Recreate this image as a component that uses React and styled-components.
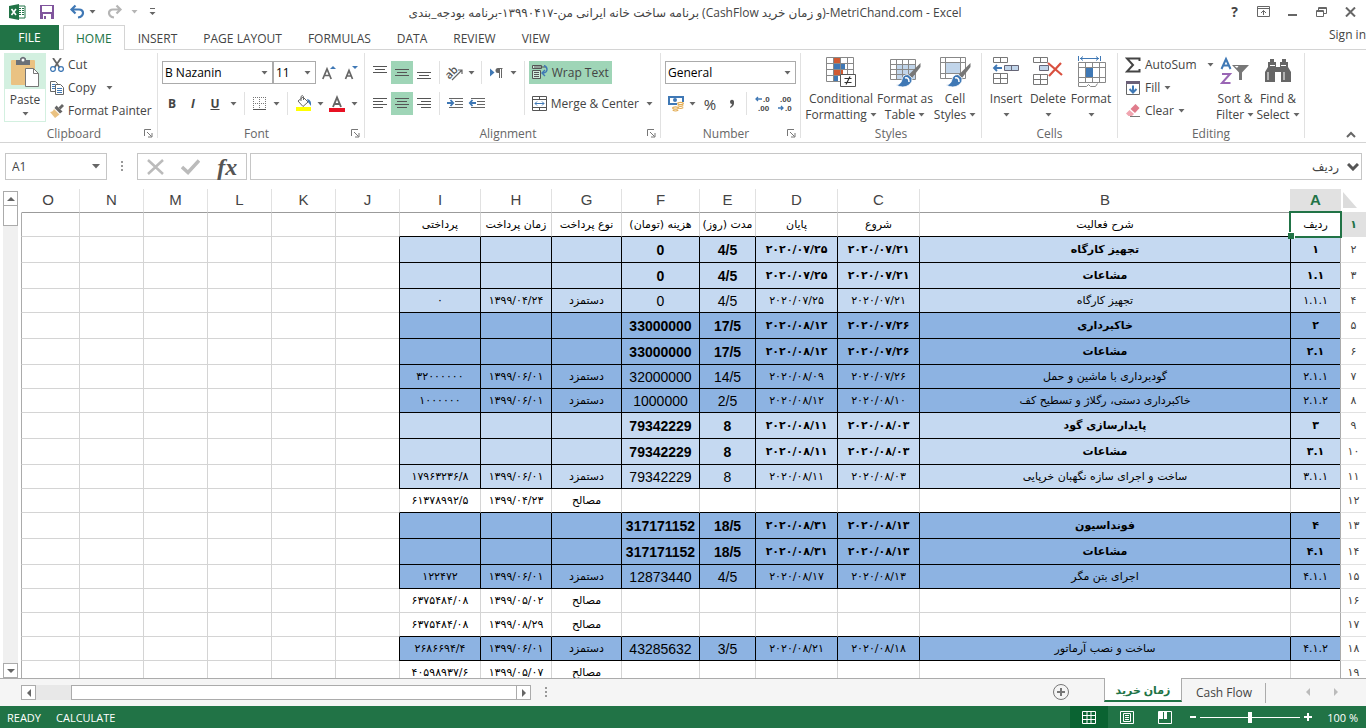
import React from "react";
import styled, { createGlobalStyle } from "styled-components";

const GlobalStyle = createGlobalStyle`
  * {
    box-sizing: border-box;
  }

  body {
    margin: 0;
    background: #fff;
    color: #444;
    font-family: "Open Sans", "DejaVu Sans", sans-serif;
    font-size: 12px;
  }

  button, select, input {
    font: inherit;
    color: inherit;
  }

  button {
    padding: 0;
    border: 0;
    background: none;
  }
`;

const Window = styled.div`
  display: flex;
  flex-direction: column;
  height: 100vh;
  overflow: hidden;
`;

/* title bar */

const TitleBar = styled.header`
  display: flex;
  align-items: center;
  justify-content: space-between;
  flex: none;
  height: 25px;
  padding: 0 5px 2px 9px;
`;

const QuickAccess = styled.div`
  display: flex;
  align-items: center;
  width: 200px;
`;

const Title = styled.h1`
  margin: 2px 0 0;
  font-size: 12px;
  font-weight: 400;
  white-space: nowrap;
`;

const WindowButtons = styled.div`
  display: flex;
  justify-content: flex-end;
  width: 200px;

  button {
    display: flex;
    align-items: center;
    justify-content: center;
    width: 29px;
    height: 20px;
    font-size: 14px;
    font-weight: 700;
  }

  button:last-child {
    width: 21px;
    margin-left: 4px;
  }
`;

/* ribbon */

const TabBar = styled.nav`
  display: flex;
  flex: none;
  height: 25px;
  border-bottom: 1px solid #d4d4d4;
`;

const FileTab = styled.button`
  width: 59px;
  height: 25px;
  margin-right: 4px;
  background: #217346;
  color: #fff;
`;

const Tab = styled.button`
  height: 25px;
  padding: 0 12px;
  border: 1px solid transparent;
  border-bottom: 0;
  white-space: nowrap;

  ${({ $active }) => $active && `
    background: #fff;
    border-color: #d4d4d4;
    color: #217346;
  `}
`;

const SignIn = styled.a`
  margin-left: auto;
  padding-top: 1px;
  color: #444;
  text-decoration: none;
  white-space: nowrap;
`;

const Ribbon = styled.section`
  display: flex;
  flex: none;
  height: 93px;
  padding-top: 3px;
  border-bottom: 1px solid #d4d4d4;
`;

const Group = styled.div`
  display: flex;
  flex-direction: column;
  flex: none;
  width: ${({ $width }) => $width}px;
  height: 85px;
  padding: 0 4px;
  border-right: 1px solid #e1e1e1;
`;

const GroupBody = styled.div`
  display: flex;
  flex: 1;
`;

const GroupFooter = styled.div`
  display: flex;
  align-items: center;
  height: 9px;
  color: #666;
  line-height: 9px;

  span {
    flex: 1;
    text-align: center;
  }

  button {
    display: flex;
  }
`;

const Stack = styled.div`
  display: flex;
  flex-direction: column;
  gap: 8px;
  padding-top: 8px;
`;

const Line = styled.div`
  display: flex;
  align-items: center;
  height: 23px;
`;

const ToolButton = styled.button`
  display: flex;
  align-items: center;
  justify-content: center;
  width: ${({ $width }) => $width || 22}px;
  height: 23px;
  background: ${({ $on }) => ($on ? "#9fd5b7" : "none")};
  font-size: ${({ $size }) => $size || 12}px;

  svg {
    overflow: visible;
  }
`;

const Divider = styled.span`
  width: 1px;
  height: ${({ $tall }) => ($tall ? 54 : 23)}px;
  margin: ${({ $tall }) => ($tall ? "8px" : "0")} 4px 0;
  background: #e1e1e1;
`;

const TextButton = styled.button`
  display: flex;
  align-items: center;
  gap: 4px;
  height: 23px;
  padding: 0 3px;
  background: ${({ $on }) => ($on ? "#9fd5b7" : "none")};
  white-space: nowrap;

  svg {
    flex: none;
  }
`;

const PasteButton = styled.button`
  display: flex;
  flex-direction: column;
  align-items: center;
  width: 42px;
  height: 69px;
  border: 1px solid #d3f0e0;
  background: linear-gradient(#d3f0e0 35px, #fff 35px);

  svg:first-child {
    margin: 2px 0 4px;
  }

  span {
    height: 20px;
    line-height: 16px;
  }
`;

const CommandList = styled.div`
  display: flex;
  flex-direction: column;
  width: ${({ $width }) => $width}px;
  padding-left: ${({ $indent }) => $indent || 0}px;

  ${TextButton} {
    padding: 0 1px;
  }
`;

const BigButton = styled.button`
  display: flex;
  flex-direction: column;
  align-items: center;
  width: ${({ $width }) => $width}px;
  height: 73px;
  padding-top: 3px;
  line-height: 16px;
  white-space: nowrap;

  > svg:first-child {
    height: 32px;
    margin-bottom: 3px;
  }

  span {
    display: flex;
    align-items: center;
    gap: 3px;
    height: 16px;
  }
`;

const SelectBox = styled.label`
  display: flex;
  align-items: center;
  width: ${({ $width }) => $width}px;
  height: 23px;
  margin-right: ${({ $gap }) => $gap || 0}px;
  padding-right: 4px;
  border: 1px solid #ababab;
  color: #000;

  select {
    flex: 1;
    min-width: 0;
    padding: 0 2px;
    border: 0;
    background: none;
    appearance: none;
  }
`;

const Collapse = styled.button`
  align-self: flex-end;
  margin: 0 10px 0 auto;
`;

/* formula bar */

const FormulaBar = styled.section`
  display: flex;
  flex: none;
  height: 46px;
  padding: 10px 4px 9px 5px;
`;

const NameBox = styled.div`
  display: flex;
  align-items: center;
  width: 102px;
  padding-right: 5px;
  border: 1px solid #c6c6c6;

  input {
    flex: 1;
    min-width: 0;
    padding: 0 6px;
    border: 0;
  }
`;

const Dots = styled.span`
  width: 2px;
  height: 11px;
  margin: ${({ $margin }) => $margin};
  background: repeating-linear-gradient(#999 0 2px, transparent 2px 4px);
`;

const FormulaButtons = styled.div`
  display: flex;
  align-items: center;
  justify-content: space-around;
  width: 110px;
  margin-right: 3px;
  border: 1px solid #c6c6c6;

  button {
    font: italic 700 24px/22px "Liberation Serif", serif;
    color: #555;
  }
`;

const FormulaInput = styled.div`
  display: flex;
  align-items: center;
  flex: 1;
  padding-right: 2px;
  border: 1px solid #c6c6c6;

  input {
    flex: 1;
    border: 0;
    padding: 0 8px;
    font-size: 12px;
  }
`;

/* sheet */

const SheetArea = styled.main`
  display: flex;
  flex: 1;
  min-height: 0;
  border-bottom: 1px solid #ababab;
`;

const VerticalScroll = styled.div`
  display: flex;
  flex-direction: column;
  flex: none;
  width: 15px;
  margin: 2px 3px 0;
  background: #f0f0f0;

  button {
    display: flex;
    align-items: center;
    justify-content: center;
    height: 15px;
    border: 1px solid #ababab;
    background: #fff;
  }

  button:last-child {
    margin-top: auto;
  }
`;

const VerticalThumb = styled.div`
  height: 20px;
  border: 1px solid #ababab;
  border-top: 0;
  background: #fff;
`;

const GridView = styled.div`
  flex: 1;
  min-width: 0;
  overflow: hidden;
`;

const Grid = styled.table`
  width: 100%;
  table-layout: fixed;
  border-collapse: separate;
  border-spacing: 0;
`;

const ColumnHead = styled.th`
  height: 24px;
  padding: 0 0 3px;
  border-bottom: 1px solid #9b9b9b;
  border-left: 1px solid #e1e1e1;
  background: ${({ $active }) => ($active ? "#e1e1e1" : "#fff")};
  color: ${({ $active }) => ($active ? "#217346" : "#444")};
  font: ${({ $active }) => ($active ? 700 : 400)} 15px "Liberation Sans", sans-serif;

  &:last-child {
    padding-right: 5px;
    border-left-color: transparent;
  }
`;

const Corner = styled.td`
  padding: 0 0 2px;
  border-bottom: 1px solid #e1e1e1;
  border-left: 1px solid #e1e1e1;
  vertical-align: middle;

  svg {
    display: block;
    margin-right: 9px;
  }
`;

const RowHead = styled.th`
  padding: 0;
  border-bottom: 1px solid #e1e1e1;
  border-left: 1px solid #ababab;
  background: ${({ $active }) => ($active ? "#e1e1e1" : "#fff")};
  color: ${({ $active }) => ($active ? "#217346" : "#444")};
  font-family: "DejaVu Sans", sans-serif;
  font-size: 11px;
  font-weight: ${({ $active }) => ($active ? 700 : 400)};
`;

const fills = { light: "#c5d9f1", dark: "#8db3e2" };

const Cell = styled.td`
  position: relative;
  height: ${({ $bold }) => ($bold ? 26 : 24)}px;
  padding: 0;
  border-left: 1px solid ${({ $fill }) => ($fill ? "#000" : "#d4d4d4")};
  border-bottom: 1px solid ${({ $fill, $ruled }) => ($fill || $ruled ? "#000" : "#d4d4d4")};
  background: ${({ $fill }) => fills[$fill] || "#fff"};
  color: #000;
  font-family: ${({ $latin }) => ($latin ? '"Liberation Sans"' : '"DejaVu Sans"')}, sans-serif;
  font-size: ${({ $latin }) => ($latin ? 14 : 11)}px;
  font-weight: ${({ $bold }) => ($bold ? 700 : 400)};
  line-height: 16px;
  text-align: center;
  white-space: nowrap;

  &:last-child {
    border-left-color: #ababab;
  }
`;

const Selection = styled.span`
  position: absolute;
  inset: -2px;
  z-index: 1;
  border: 2px solid #217346;

  &::after {
    content: "";
    position: absolute;
    left: -3px;
    bottom: -3px;
    width: 6px;
    height: 6px;
    border: solid #fff;
    border-width: 1px 1px 0 0;
    background: #217346;
  }
`;

/* bottom */

const BottomBar = styled.section`
  display: flex;
  align-items: flex-start;
  flex: none;
  height: 27px;
  background: #f5f5f5;
`;

const HorizontalScroll = styled.div`
  display: flex;
  width: 510px;
  height: 15px;
  margin: 6px 0 0 21px;
  background: #e8e8e8;

  button {
    display: flex;
    align-items: center;
    justify-content: center;
    width: 15px;
    border: 1px solid #ababab;
    background: #fff;
  }
`;

const HorizontalThumb = styled.div`
  flex: 1;
  margin-left: 35px;
  border: 1px solid #ababab;
  border-right: 0;
  background: #fff;
`;

const AddSheet = styled.button`
  height: 18px;
  margin: 4px 34px 0 auto;
`;

const SheetTab = styled.button`
  min-width: ${({ $active }) => ($active ? 78 : 84)}px;
  height: ${({ $active }) => ($active ? 24 : 26)}px;
  padding: 0 8px;
  white-space: nowrap;

  ${({ $active }) => $active ? `
    margin-top: -1px;
    background: #fff;
    border: solid #ababab;
    border-width: 0 1px 2px;
    border-bottom-color: #217346;
    color: #217346;
    font-size: 11px;
    font-weight: 700;
  ` : `
    background: linear-gradient(#ababab, #ababab) right 4px / 1px 20px no-repeat;
  `}
`;

const SheetArrows = styled.div`
  display: flex;
  gap: 20px;
  padding: 9px 26px 0 38px;

  button {
    display: flex;
  }
`;

const StatusBar = styled.footer`
  display: flex;
  align-items: center;
  flex: none;
  height: 22px;
  padding-left: 7px;
  background: #217346;
  color: #fff;
  font-size: 11px;

  > span {
    margin-right: 15px;
  }
`;

const ViewButtons = styled.div`
  display: flex;
  height: 22px;
  margin-left: auto;
`;

const ViewButton = styled.button`
  display: flex;
  align-items: center;
  justify-content: center;
  width: 38px;
  background: ${({ $on }) => ($on ? "#0a6332" : "none")};
`;

const ZoomControl = styled.label`
  display: flex;
  align-items: center;
  padding: 0 8px 0 6px;

  input {
    width: 100px;
    height: 12px;
    margin: 0 4px;
    background: linear-gradient(#fff, #fff) center / 100% 1px no-repeat;
    appearance: none;
  }

  input::-webkit-slider-thumb {
    width: 4px;
    height: 11px;
    background: #fff;
    appearance: none;
  }

  output {
    width: 36px;
    margin-left: 10px;
    text-align: right;
    white-space: nowrap;
  }
`;

/* icons */

const Caret = ({ color = "#666" }) => (
  <svg width="7" height="4" viewBox="0 0 7 4"><path d="M0.5 0h6L3.5 3.5z" fill={color} /></svg>
);

const CaretButton = ({ width = 14, label, color }) => (
  <ToolButton $width={width} aria-label={label}><Caret color={color} /></ToolButton>
);

const Launcher = () => (
  <svg width="9" height="9" viewBox="0 0 9 9" fill="none" stroke="#777">
    <path d="M0.5 7V0.5H7M3 3l4.5 4.5M8 4v4H4" />
  </svg>
);

const Arrow = ({ d, color = "#666" }) => (
  <svg width="8" height="8" viewBox="0 0 8 8"><path d={d} fill={color} /></svg>
);

const ExcelIcon = () => (
  <svg width="17" height="16" viewBox="0 0 17 16">
    <path d="M9 2h7v12H9z" fill="#fff" stroke="#217346" />
    <path d="M10 4.5h2M13 4.5h2M10 6.5h2M13 6.5h2M10 8.5h2M13 8.5h2M10 10.5h2M13 10.5h2" stroke="#217346" />
    <path d="M0 2l10-2v16L0 14z" fill="#217346" />
    <path d="M2.5 5L7 11M7 5l-4.500 6" stroke="#fff" strokeWidth="1.6" />
  </svg>
);

const SaveIcon = () => (
  <svg width="14" height="14" viewBox="0 0 14 14">
    <path d="M0 0h14v14H0z" fill="#80559d" />
    <path d="M2 1h10v6H2zM3 9h8v5H3z" fill="#fff" />
    <path d="M4 11h2v3H4z" fill="#80559d" />
  </svg>
);

const UndoIcon = ({ color, flip }) => (
  <svg width="15" height="14" viewBox="0 0 15 14" fill="none" stroke={color} strokeWidth="2.200">
    <path d="M5.500 0.500L1.500 4.500l4 4M2 4.500h7c5.500 0 5.500 7-1 8" transform={flip ? "matrix(-1 0 0 1 15 0)" : undefined} />
  </svg>
);

const MoreIcon = () => (
  <svg width="7" height="8" viewBox="0 0 7 8" fill="#666"><path d="M1 0h5v1H1zM0.5 4h6L3.5 7z" /></svg>
);

const RibbonToggleIcon = () => (
  <svg width="13" height="11" viewBox="0 0 13 11" fill="none" stroke="#666">
    <path d="M0.5 0.5h12v10H0.5zM0.5 2.5h12M6.5 9V4.5M4 7l2.500-2.500L9 7" />
  </svg>
);

const PasteIcon = () => (
  <svg width="30" height="32" viewBox="0 0 30 32">
    <rect x="1" y="4" width="24" height="25" rx="1" fill="#eac282" />
    <path d="M6 4h4V2.5Q13 -1 16 2.5V4h4v5H6z" fill="#6b7078" />
    <circle cx="13" cy="4" r="1.5" fill="#fff" />
    <path d="M15.5 12.5h8l5 5v13h-13z" fill="#fff" stroke="#777" />
    <path d="M23.5 12.5v5h5" fill="none" stroke="#777" />
  </svg>
);

const CutIcon = () => (
  <svg width="14" height="14" viewBox="0 0 14 14" fill="none">
    <path d="M3 0l6.500 9.500M11 0L4.500 9.500" stroke="#666" strokeWidth="1.8" />
    <circle cx="3" cy="11" r="2.4" stroke="#3f78b5" strokeWidth="1.3" />
    <circle cx="11" cy="11" r="2.4" stroke="#3f78b5" strokeWidth="1.3" />
  </svg>
);

const CopyIcon = () => (
  <svg width="14" height="14" viewBox="0 0 14 14" fill="#fff" stroke="#666">
    <path d="M0.5 0.5h5l2 2v8h-7z" />
    <path d="M2 3.5h3M2 5.5h4M2 7.5h4" stroke="#3f78b5" />
    <path d="M5.5 3.5h5l3 3v7h-8z" />
    <path d="M7 7.5h5M7 9.5h5M7 11.5h5" stroke="#3f78b5" />
  </svg>
);

const PainterIcon = () => (
  <svg width="14" height="14" viewBox="0 0 14 14">
    <path d="M12 0l2 2-3.500 3.500L8.500 3.500z" fill="#666" />
    <path d="M6.5 1.500l6 6-2.500 2L4.500 4z" fill="#666" />
    <path d="M4 5l5.500 5.500L5 14 0 8q3 0 4-3z" fill="#eac282" />
  </svg>
);

const GrowIcon = ({ small }) => (
  <svg width="14" height="14" viewBox="0 0 14 14">
    <path d={small ? "M1.5 13L5 4.500l3.500 8.500M2.800 10h4.400" : "M0.800 13L5 3l4.200 10M2.500 9.500h5"} fill="none" stroke="#666" strokeWidth="1.7" />
    <path d={small ? "M8 0h6L11 3z" : "M8 3h6L11 0z"} fill="#3f78b5" />
  </svg>
);

const BordersIcon = () => (
  <svg width="13" height="13" viewBox="0 0 13 13" fill="none" stroke="#777">
    <path d="M0 0.5h13M0 6.5h13M0.5 0v12M6.5 0v12M12.5 0v12" strokeDasharray="1 1" />
    <path d="M0 12.5h13" stroke="#555" />
  </svg>
);

const FillColorIcon = () => (
  <svg width="17" height="17" viewBox="0 0 17 17">
    <path d="M1 12h15v4H1z" fill="#ffff00" />
    <path d="M3 6l5-4 5 5-5 4.500z" fill="#fff" stroke="#666" />
    <path d="M6 6V1.500Q7.500-.5 8.500 1.500V5" fill="none" stroke="#666" />
    <path d="M12 4q5 1 4 7l-3-4z" fill="#3f78b5" />
  </svg>
);

const FontColorIcon = () => (
  <svg width="16" height="16" viewBox="0 0 16 16">
    <path d="M0 12h16v4H0z" fill="#e81123" />
    <path d="M4 11L8 1.500l4 9.500M5.500 8h5" fill="none" stroke="#666" strokeWidth="1.9" />
  </svg>
);

const LinesIcon = ({ d }) => (
  <svg width="14" height="13" viewBox="0 0 14 13" stroke="#555"><path d={d} /></svg>
);

const OrientationIcon = () => (
  <svg width="17" height="16" viewBox="0 0 17 16">
    <text x="-1" y="11" transform="rotate(-45 5 9)" fontSize="11" fontWeight="600" fill="#555">ab</text>
    <path d="M5 15L15 5M11 5h4v4" fill="none" stroke="#666" strokeWidth="1.2" />
  </svg>
);

const DirectionIcon = () => (
  <svg width="13" height="10" viewBox="0 0 13 10">
    <path d="M0 0.500l4.500 4-4.500 4z" fill="#3f78b5" />
    <path d="M12.500 0.5H8.500M9.5 0.5V10M11.5 0.5V10" fill="none" stroke="#666" />
    <path d="M9.500 0H8a2.500 2.500 0 000 5h1.500z" fill="#666" />
  </svg>
);

const IndentIcon = ({ left }) => (
  <svg width="16" height="12" viewBox="0 0 16 12" fill="none">
    <path d="M2 0.5h14M8 3.5h8M8 6.5h8M2 9.5h14" stroke="#666" />
    <path d={left ? "M7 5H1M3.500 2L0.800 5l2.700 3" : "M0 5h6M3.500 2l2.700 3-2.700 3"} stroke="#3f78b5" strokeWidth="1.8" />
  </svg>
);

const WrapIcon = () => (
  <svg width="16" height="15" viewBox="0 0 16 15" fill="none" stroke="#555">
    <path d="M0.5 0.5h9v3h-9zM0.5 5.5h8v8h-8z" fill="#fff" fillOpacity="0.5" />
    <path d="M2 7.500h5M2 9.500h5M2 11.500h5M2 2h12" />
    <path d="M12 0.500q3 1 3 4t-4 3.500M13 5l-3 3 3 3" stroke="#3f78b5" strokeWidth="1.4" />
  </svg>
);

const MergeIcon = () => (
  <svg width="15" height="15" viewBox="0 0 15 15" fill="none" stroke="#555">
    <path d="M0.5 0.5h14v14H0.5zM0.5 3.5h14M0.5 11.5h14M7.5 0v3.500M7.5 11.5V15" />
    <path d="M3 7.500h9M5 5.500l-2 2 2 2M10 5.500l2 2-2 2" stroke="#3f78b5" />
  </svg>
);

const CurrencyIcon = () => (
  <svg width="16" height="16" viewBox="0 0 16 16">
    <path d="M1 1h14v7H1z" fill="#fff" stroke="#3f78b5" strokeWidth="2" />
    <circle cx="7" cy="4" r="2" fill="#3f78b5" />
    <path d="M9 6h7v5H9zM4 10h7v6H4z" fill="#fff" />
    <g fill="none" stroke="#e3ac53" strokeWidth="1.2">
      <ellipse cx="12.500" cy="7.500" rx="2.800" ry="1.200" />
      <path d="M9.700 9.500q2.800 2 5.600 0M9.700 11.500q2.800 2 5.600 0M4.700 14q2.800 2 5.600 0" />
      <ellipse cx="7.500" cy="12" rx="2.800" ry="1.200" />
    </g>
  </svg>
);

const DecimalIcon = ({ less }) => (
  <svg width="15" height="15" viewBox="0 0 15 15" fontFamily="Liberation Sans" fontSize="8" fontWeight="700">
    <text x={less ? 3 : 8} y="6" fill="#444">{less ? ".00" : ".0"}</text>
    <text x={less ? 8 : 3} y="15" fill="#444">{less ? ".0" : ".00"}</text>
    <path d={less ? "M1 12h5M4 10l2 2-2 2" : "M1 3h6M3 1L1 3l2 2"} fill="none" stroke="#3f78b5" strokeWidth="1.3" />
  </svg>
);

const CommaIcon = () => (
  <svg width="6" height="8" viewBox="0 0 6 8"><path d="M1 2a2 2 0 014-.5Q5.500 6 1.500 8L1 7q2-1.500 2-3-2 0-2-2z" fill="#555" /></svg>
);

const ConditionalIcon = () => (
  <svg width="30" height="32" viewBox="0 0 30 32">
    <path d="M0.5 1.5h27v24h-27z" fill="#fff" />
    <path d="M8 2h6v6H8zM8 14h9v5H8z" fill="#d05a32" />
    <path d="M8 8h11v5H8zM8 20h4v5H8z" fill="#3f78b5" />
    <path d="M0.5 1.5h27v24H0.5zM0.5 7.5h27M0.5 13.5h27M0.5 19.5h27M7.5 1.5v24M14.5 1.5v24M21.5 1.5v24" fill="none" stroke="#888" />
    <path d="M14.5 18.5h15v12h-15z" fill="#fff" stroke="#555" />
    <path d="M18.5 22.5h7M18.5 26.5h7M24 20.5l-4 8" stroke="#333" strokeWidth="1.2" />
  </svg>
);

const Brush = () => (
  <>
    <path d="M30.500 7L18.500 19l3.500 3 8.500-11z" fill="#777" />
    <path d="M18 18.500q-5 0-6 5-1 5-6 5.500 7 4 13 0 4-3 3-7z" fill="#3f78b5" stroke="#fff" strokeWidth="0.8" />
    <path d="M15 22q4-1 4 4" stroke="#fff" strokeWidth="1.5" fill="none" />
  </>
);

const TableIcon = () => (
  <svg width="31" height="32" viewBox="0 0 31 32">
    <path d="M7 9h18v15H7z" fill="#c1d5ea" />
    <path d="M0.5 3.5h25v20h-25zM0.5 8.5h25M0.5 13.5h25M0.5 18.5h25M6.5 3.5v20M12.5 3.5v20M18.5 3.5v20" fill="none" stroke="#888" />
    <Brush />
  </svg>
);

const CellStylesIcon = () => (
  <svg width="31" height="32" viewBox="0 0 31 32">
    <path d="M6 7h15v11H6z" fill="#c1d5ea" />
    <path d="M0.5 1.5h25v21h-25zM0.5 6.5h25M0.5 17.5h25M5.5 1.5v21M20.5 1.5v21" fill="none" stroke="#888" />
    <Brush />
  </svg>
);

const InsertIcon = () => (
  <svg width="28" height="32" viewBox="0 0 28 32" fill="#fff" stroke="#777">
    <path d="M1.5 1.5h14v5h-14zM8.5 1.5v5M1.5 17.5h14v10h-14zM8.5 17.5v10M1.5 22.5h14" />
    <path d="M12.5 9.5h14v5h-14zM19.5 9.5v5" fill="#c1d5ea" stroke="#667" />
    <path d="M2 12h8M5 9l-3 3 3 3" fill="none" stroke="#3f78b5" strokeWidth="1.8" />
  </svg>
);

const DeleteIcon = () => (
  <svg width="30" height="32" viewBox="0 0 30 32" fill="#fff" stroke="#777">
    <path d="M0.5 1.5h14v5h-14zM7.5 1.5v5M0.5 18.5h14v10h-14zM7.5 18.5v10M0.5 23.5h14" />
    <path d="M6.5 9.5h9v5h-9z" fill="#c1d5ea" stroke="#667" />
    <path d="M15 7l14 12M28 7L16 20" fill="none" stroke="#d9503f" strokeWidth="2.2" />
  </svg>
);

const FormatIcon = () => (
  <svg width="29" height="32" viewBox="0 0 29 32" fill="none" stroke="#888">
    <path d="M1.5 6.5h27v20h-27zM1.5 11.5h27M1.5 21.5h27M8.5 6.5v20M15.5 6.5v20M22.5 6.5v20" />
    <path d="M1.5 27v3.500h8l2-2 2 2h5l2-3" fill="#fff" />
    <path d="M9 12h7v9H9z" fill="#3f78b5" stroke="none" />
    <path d="M1.5 0v5M23.5 0v5M3 2.5h19M6 0.5l-2.500 2L6 4.500M19 0.5l2.500 2L19 4.500" stroke="#3f78b5" />
  </svg>
);

const SumIcon = () => (
  <svg width="16" height="16" viewBox="0 0 16 16"><path d="M14.500 4V1.500H2L8 8l-6 6.500h12.500V12" fill="none" stroke="#444" strokeWidth="2" /></svg>
);

const FillIcon = () => (
  <svg width="16" height="16" viewBox="0 0 16 16" fill="none">
    <path d="M1.5 1.5h13v13h-13z" stroke="#666" />
    <path d="M1 1h14v3H1z" fill="#6b6078" />
    <path d="M8 5.500v7M4.500 9L8 12.500 11.500 9" stroke="#3f78b5" strokeWidth="2" />
  </svg>
);

const EraserIcon = () => (
  <svg width="16" height="16" viewBox="0 0 16 16">
    <path d="M10.500 1L14.500 5l-4.500 5-4.500-4z" fill="#e07c8c" />
    <path d="M4.500 7L9 11l-2 2H3.500L1 10.500z" fill="#f0a5b0" />
    <path d="M5 13.5h10" stroke="#777" />
  </svg>
);

const SortIcon = () => (
  <svg width="30" height="32" viewBox="0 0 30 32" fill="none">
    <path d="M1.500 13L6 3l4.500 10M3 9.500h6" stroke="#3f78b5" strokeWidth="2" />
    <path d="M2 18h8L2 27h8.500" stroke="#9a66b5" strokeWidth="2" />
    <path d="M12 9h17l-7 7.500V24h-3v-7.500z" fill="#777" />
    <path d="M14.500 10h4l-1.500 2z" fill="#fff" />
  </svg>
);

const FindIcon = () => (
  <svg width="28" height="32" viewBox="0 0 28 32" fill="#666">
    <path d="M6 3h4v3h2v5h4V6h2V3h4v3h2v5l3 5v10H17V16h-6v10H1V16l3-5V6h2z" />
    <path d="M4 16v8M20 16v8M6 9.500h5M17 9.500h5" stroke="#fff" />
  </svg>
);

const GroupBox = ({ label, width, launcher, children }) => (
  <Group $width={width}>
    <GroupBody>{children}</GroupBody>
    <GroupFooter>
      <span>{label}</span>
      {launcher && <button aria-label={`${label} settings`}><Launcher /></button>}
    </GroupFooter>
  </Group>
);

const Combo = ({ label, value, width, gap }) => (
  <SelectBox $width={width} $gap={gap}>
    <select aria-label={label}>
      <option>{value}</option>
    </select>
    <Caret />
  </SelectBox>
);

/* data */

const tabs = ["HOME", "INSERT", "PAGE LAYOUT", "FORMULAS", "DATA", "REVIEW", "VIEW"];

const columns = [
  ["A", 50], ["B"], ["C", 82], ["D", 82], ["E", 56], ["F", 78], ["G", 70], ["H", 71],
  ["I", 81], ["J", 64], ["K", 64], ["L", 64], ["M", 64], ["N", 64], ["O", 58],
];

const rows = [
  { n: "۱", ruled: true, cells: ["ردیف", "شرح فعالیت", "شروع", "پایان", "مدت (روز)", "هزینه (تومان)", "نوع پرداخت", "زمان پرداخت", "پرداختی"] },
  { n: "۲", fill: "light", bold: true, cells: ["۱", "تجهیز کارگاه", "۲۰۲۰/۰۷/۲۱", "۲۰۲۰/۰۷/۲۵", "4/5", "0"] },
  { n: "۳", fill: "light", bold: true, cells: ["۱.۱", "مشاعات", "۲۰۲۰/۰۷/۲۱", "۲۰۲۰/۰۷/۲۵", "4/5", "0"] },
  { n: "۴", fill: "light", cells: ["۱.۱.۱", "تجهیز کارگاه", "۲۰۲۰/۰۷/۲۱", "۲۰۲۰/۰۷/۲۵", "4/5", "0", "دستمزد", "۱۳۹۹/۰۴/۲۴", "۰"] },
  { n: "۵", fill: "dark", bold: true, cells: ["۲", "خاکبرداری", "۲۰۲۰/۰۷/۲۶", "۲۰۲۰/۰۸/۱۲", "17/5", "33000000"] },
  { n: "۶", fill: "dark", bold: true, cells: ["۲.۱", "مشاعات", "۲۰۲۰/۰۷/۲۶", "۲۰۲۰/۰۸/۱۲", "17/5", "33000000"] },
  { n: "۷", fill: "dark", cells: ["۲.۱.۱", "گودبرداری با ماشین و حمل", "۲۰۲۰/۰۷/۲۶", "۲۰۲۰/۰۸/۰۹", "14/5", "32000000", "دستمزد", "۱۳۹۹/۰۶/۰۱", "۳۲۰۰۰۰۰۰"] },
  { n: "۸", fill: "dark", cells: ["۲.۱.۲", "خاکبرداری دستی، رگلاژ و تسطیح کف", "۲۰۲۰/۰۸/۱۰", "۲۰۲۰/۰۸/۱۲", "2/5", "1000000", "دستمزد", "۱۳۹۹/۰۶/۰۱", "۱۰۰۰۰۰۰"] },
  { n: "۹", fill: "light", bold: true, cells: ["۳", "پایدارسازی گود", "۲۰۲۰/۰۸/۰۳", "۲۰۲۰/۰۸/۱۱", "8", "79342229"] },
  { n: "۱۰", fill: "light", bold: true, cells: ["۳.۱", "مشاعات", "۲۰۲۰/۰۸/۰۳", "۲۰۲۰/۰۸/۱۱", "8", "79342229"] },
  { n: "۱۱", fill: "light", cells: ["۳.۱.۱", "ساخت و اجرای سازه نگهبان خرپایی", "۲۰۲۰/۰۸/۰۳", "۲۰۲۰/۰۸/۱۱", "8", "79342229", "دستمزد", "۱۳۹۹/۰۶/۰۱", "۱۷۹۶۳۲۳۶/۸"] },
  { n: "۱۲", ruled: true, cells: ["", "", "", "", "", "", "مصالح", "۱۳۹۹/۰۴/۲۳", "۶۱۳۷۸۹۹۲/۵"] },
  { n: "۱۳", fill: "dark", bold: true, cells: ["۴", "فونداسیون", "۲۰۲۰/۰۸/۱۳", "۲۰۲۰/۰۸/۳۱", "18/5", "317171152"] },
  { n: "۱۴", fill: "dark", bold: true, cells: ["۴.۱", "مشاعات", "۲۰۲۰/۰۸/۱۳", "۲۰۲۰/۰۸/۳۱", "18/5", "317171152"] },
  { n: "۱۵", fill: "dark", cells: ["۴.۱.۱", "اجرای بتن مگر", "۲۰۲۰/۰۸/۱۳", "۲۰۲۰/۰۸/۱۷", "4/5", "12873440", "دستمزد", "۱۳۹۹/۰۶/۰۱", "۱۲۲۴۷۲"] },
  { n: "۱۶", cells: ["", "", "", "", "", "", "مصالح", "۱۳۹۹/۰۵/۰۲", "۶۳۷۵۴۸۴/۰۸"] },
  { n: "۱۷", ruled: true, cells: ["", "", "", "", "", "", "مصالح", "۱۳۹۹/۰۸/۲۹", "۶۳۷۵۴۸۴/۰۸"] },
  { n: "۱۸", fill: "dark", cells: ["۴.۱.۲", "ساخت و نصب آرماتور", "۲۰۲۰/۰۸/۱۸", "۲۰۲۰/۰۸/۲۱", "3/5", "43285632", "دستمزد", "۱۳۹۹/۰۶/۰۱", "۲۶۸۶۶۹۴/۴"] },
  { n: "۱۹", cells: ["", "", "", "", "", "", "مصالح", "۱۳۹۹/۰۵/۰۷", "۴۰۵۹۸۹۳۷/۶"] },
];

const Header = () => (
  <TitleBar>
    <QuickAccess>
      <ExcelIcon />
      <ToolButton $width={42} aria-label="Save"><SaveIcon /></ToolButton>
      <ToolButton $width={18} aria-label="Undo"><UndoIcon color="#3f78b5" /></ToolButton>
      <CaretButton width={12} label="Undo list" />
      <ToolButton $width={32} aria-label="Redo"><UndoIcon color="#b5b5b5" flip /></ToolButton>
      <CaretButton width={8} label="Redo list" color="#b5b5b5" />
      <ToolButton $width={28} aria-label="Customize toolbar"><MoreIcon /></ToolButton>
    </QuickAccess>
    <Title>برنامه ساخت خانه ایرانی من-۱۳۹۹۰۴۱۷-برنامه بودجه_بندی (CashFlow و زمان خرید)-MetriChand.com - Excel</Title>
    <WindowButtons>
      <button aria-label="Help">?</button>
      <button aria-label="Ribbon display"><RibbonToggleIcon /></button>
      <button aria-label="Minimize"><svg width="9" height="8"><path d="M0 6h9v2H0z" fill="#666" /></svg></button>
      <button aria-label="Restore">
        <svg width="11" height="10" fill="none" stroke="#666"><path d="M2.5 3V0.5h8v6H8M0.5 3.5h7v6h-7zM2.5 1.5h8M0.5 4.5h7" /></svg>
      </button>
      <button aria-label="Close">
        <svg width="11" height="10" stroke="#666" strokeWidth="2"><path d="M1 0.5l9 9M10 0.5l-9 9" /></svg>
      </button>
    </WindowButtons>
  </TitleBar>
);

const Commands = () => (
  <Ribbon>
    <GroupBox label="Clipboard" width={158} launcher>
      <PasteButton>
        <PasteIcon />
        <span>Paste</span>
        <Caret />
      </PasteButton>
      <CommandList $width={107} $indent={3}>
        <TextButton><CutIcon />Cut</TextButton>
        <TextButton><CopyIcon />Copy&nbsp;&nbsp;<Caret /></TextButton>
        <TextButton><PainterIcon />Format Painter</TextButton>
      </CommandList>
    </GroupBox>
    <GroupBox label="Font" width={207} launcher>
      <Stack>
        <Line>
          <Combo label="Font name" value="B Nazanin" width={111} />
          <Combo label="Font size" value="11" width={43} gap={2} />
          <ToolButton aria-label="Increase font size"><GrowIcon /></ToolButton>
          <ToolButton aria-label="Decrease font size"><GrowIcon small /></ToolButton>
        </Line>
        <Line>
          <ToolButton $width={20}><b>B</b></ToolButton>
          <ToolButton><b><i>I</i></b></ToolButton>
          <ToolButton><b><u>U</u></b></ToolButton>
          <CaretButton label="Underline styles" />
          <Divider />
          <ToolButton $width={20} aria-label="Borders"><BordersIcon /></ToolButton>
          <CaretButton label="Border styles" />
          <Divider />
          <ToolButton aria-label="Fill color"><FillColorIcon /></ToolButton>
          <CaretButton width={12} label="Fill colors" />
          <ToolButton aria-label="Font color"><FontColorIcon /></ToolButton>
          <CaretButton width={12} label="Font colors" />
        </Line>
      </Stack>
    </GroupBox>
    <GroupBox label="Alignment" width={296} launcher>
      <Stack>
        <Line>
          <ToolButton aria-label="Top align"><LinesIcon d="M0 0.5h14M2 3.5h10M0 6.5h14" /></ToolButton>
          <ToolButton $on aria-label="Middle align"><LinesIcon d="M0 3.5h14M2 6.5h10M0 9.5h14" /></ToolButton>
          <ToolButton aria-label="Bottom align"><LinesIcon d="M0 6.5h14M2 9.5h10M0 12.5h14" /></ToolButton>
          <Divider />
          <ToolButton aria-label="Orientation"><OrientationIcon /></ToolButton>
          <CaretButton width={11} label="Orientation list" />
          <Divider />
          <ToolButton $width={20} aria-label="Text direction"><DirectionIcon /></ToolButton>
          <CaretButton label="Text direction list" />
        </Line>
        <Line>
          <ToolButton aria-label="Align left"><LinesIcon d="M0 1.5h14M0 4.5h10M0 7.5h14M0 10.5h10" /></ToolButton>
          <ToolButton $on aria-label="Center"><LinesIcon d="M0 1.5h14M2 4.5h10M0 7.5h14M2 10.5h10" /></ToolButton>
          <ToolButton aria-label="Align right"><LinesIcon d="M0 1.5h14M4 4.5h10M0 7.5h14M4 10.5h10" /></ToolButton>
          <Divider />
          <ToolButton aria-label="Increase indent"><IndentIcon /></ToolButton>
          <ToolButton aria-label="Decrease indent"><IndentIcon left /></ToolButton>
        </Line>
      </Stack>
      <Divider $tall />
      <Stack>
        <Line><TextButton $on><WrapIcon />Wrap Text</TextButton></Line>
        <Line>
          <TextButton><MergeIcon />Merge &amp; Center</TextButton>
          <CaretButton label="Merge options" />
        </Line>
      </Stack>
    </GroupBox>
    <GroupBox label="Number" width={140} launcher>
      <Stack>
        <Combo label="Number format" value="General" width={131} />
        <Line>
          <ToolButton aria-label="Accounting format"><CurrencyIcon /></ToolButton>
          <CaretButton width={11} label="Currencies" />
          <ToolButton $width={24} $size={15}>%</ToolButton>
          <ToolButton $width={20} aria-label="Comma style"><CommaIcon /></ToolButton>
          <Divider />
          <ToolButton aria-label="Increase decimal"><DecimalIcon /></ToolButton>
          <ToolButton aria-label="Decrease decimal"><DecimalIcon less /></ToolButton>
        </Line>
      </Stack>
    </GroupBox>
    <GroupBox label="Styles" width={181}>
      <BigButton $width={72}><ConditionalIcon /><span>Conditional</span><span>Formatting<Caret /></span></BigButton>
      <BigButton $width={56}><TableIcon /><span>Format as</span><span>Table<Caret /></span></BigButton>
      <BigButton $width={44}><CellStylesIcon /><span>Cell</span><span>Styles<Caret /></span></BigButton>
    </GroupBox>
    <GroupBox label="Cells" width={136}>
      <BigButton $width={40}><InsertIcon /><span>Insert</span><span><Caret /></span></BigButton>
      <BigButton $width={44}><DeleteIcon /><span>Delete</span><span><Caret /></span></BigButton>
      <BigButton $width={42}><FormatIcon /><span>Format</span><span><Caret /></span></BigButton>
    </GroupBox>
    <GroupBox label="Editing" width={187}>
      <CommandList $width={92} $indent={2}>
        <TextButton><SumIcon />AutoSum&nbsp;&nbsp;<Caret /></TextButton>
        <TextButton><FillIcon />Fill<Caret /></TextButton>
        <TextButton><EraserIcon />Clear<Caret /></TextButton>
      </CommandList>
      <BigButton $width={42}><SortIcon /><span>Sort &amp;</span><span>Filter<Caret /></span></BigButton>
      <BigButton $width={44}><FindIcon /><span>Find &amp;</span><span>Select<Caret /></span></BigButton>
    </GroupBox>
    <Collapse aria-label="Collapse the ribbon">
      <svg width="10" height="7" fill="none" stroke="#666" strokeWidth="2"><path d="M1 6l4-4 4 4" /></svg>
    </Collapse>
  </Ribbon>
);

const Sheet = () => (
  <SheetArea>
    <VerticalScroll>
      <button aria-label="Scroll up"><Arrow d="M0 6h8L4 2z" /></button>
      <VerticalThumb />
      <button aria-label="Scroll down"><Arrow d="M0 2h8L4 6z" /></button>
    </VerticalScroll>
    <GridView>
      <Grid dir="rtl">
        <colgroup>
          <col width="26" />
          {columns.map(([name, width]) => <col key={name} width={width} />)}
        </colgroup>
        <thead>
          <tr>
            <Corner>
              <svg width="14" height="16"><path d="M0 0v16h14z" fill="#dcdcdc" /></svg>
            </Corner>
            {columns.map(([name]) => (
              <ColumnHead key={name} scope="col" $active={name === "A"}>{name}</ColumnHead>
            ))}
          </tr>
        </thead>
        <tbody>
          {rows.map((row, r) => (
            <tr key={row.n}>
              <RowHead scope="row" $active={r === 0}>{row.n}</RowHead>
              {columns.map(([name], c) => {
                const inData = c < 9;
                return (
                  <Cell
                    key={name}
                    $fill={inData ? row.fill : undefined}
                    $ruled={inData && row.ruled}
                    $bold={row.bold}
                    $latin={r > 0 && (name === "E" || name === "F")}
                  >
                    {row.cells[c]}
                    {r === 0 && c === 0 && <Selection />}
                  </Cell>
                );
              })}
            </tr>
          ))}
        </tbody>
      </Grid>
    </GridView>
  </SheetArea>
);

const App = () => (
  <>
    <GlobalStyle />
    <Window>
      <Header />
      <TabBar>
        <FileTab>FILE</FileTab>
        {tabs.map((tab) => <Tab key={tab} $active={tab === "HOME"}>{tab}</Tab>)}
        <SignIn href="#">Sign in</SignIn>
      </TabBar>
      <Commands />
      <FormulaBar>
        <NameBox>
          <input aria-label="Name box" defaultValue="A1" />
          <svg width="9" height="5"><path d="M0 0h8L4 4.500z" fill="#666" /></svg>
        </NameBox>
        <Dots $margin="8px 14px 0" />
        <FormulaButtons>
          <button aria-label="Cancel">
            <svg width="17" height="16" stroke="#bbb" strokeWidth="2.5"><path d="M1 1l15 14M16 1L1 15" /></svg>
          </button>
          <button aria-label="Enter">
            <svg width="19" height="16" fill="none" stroke="#bbb" strokeWidth="3.5"><path d="M1 8l6 5.500L18 1.500" /></svg>
          </button>
          <button>fx</button>
        </FormulaButtons>
        <FormulaInput>
          <input aria-label="Formula" dir="rtl" defaultValue="ردیف" />
          <svg width="12" height="8" fill="none" stroke="#555" strokeWidth="3"><path d="M1 1l5 5 5-5" /></svg>
        </FormulaInput>
      </FormulaBar>
      <Sheet />
      <BottomBar>
        <HorizontalScroll>
          <button aria-label="Scroll left"><Arrow d="M6 0v8L2 4z" /></button>
          <HorizontalThumb />
          <button aria-label="Scroll right"><Arrow d="M2 0v8l4-4z" /></button>
        </HorizontalScroll>
        <Dots $margin="8px 14px 0" />
        <AddSheet aria-label="New sheet">
          <svg width="18" height="18" fill="none" stroke="#777"><circle cx="9" cy="9" r="7.5" /><path d="M9 5v8M5 9h8" strokeWidth="2" /></svg>
        </AddSheet>
        <SheetTab $active>زمان خرید</SheetTab>
        <SheetTab>Cash Flow</SheetTab>
        <SheetArrows>
          <button aria-label="Previous sheet"><Arrow d="M6 0v8L2 4z" color="#bbb" /></button>
          <button aria-label="Next sheet"><Arrow d="M2 0v8l4-4z" color="#bbb" /></button>
        </SheetArrows>
      </BottomBar>
      <StatusBar>
        <span>READY</span>
        <span>CALCULATE</span>
        <ViewButtons>
          <ViewButton $on aria-label="Normal view">
            <svg width="14" height="13" fill="none" stroke="#fff"><path d="M0.5 0.5h13v12H0.5zM0.5 4.5h13M0.5 8.5h13M5 0.5v12M9 0.5v12" /></svg>
          </ViewButton>
          <ViewButton aria-label="Page layout">
            <svg width="14" height="13" fill="none" stroke="#fff"><path d="M0.5 0.5h13v12H0.5zM3.5 2.5h7v8h-7zM5 4.5h4M5 6.5h4M5 8.5h4" /></svg>
          </ViewButton>
          <ViewButton aria-label="Page break preview">
            <svg width="14" height="13" fill="none" stroke="#fff"><path d="M0.5 0.5h13v12H0.5z" /><path d="M1 1h4v7H1zM6 1h3v7H6z" fill="#fff" stroke="none" /></svg>
          </ViewButton>
        </ViewButtons>
        <ZoomControl>
          <svg width="6" height="2"><path d="M0 0h6v2H0z" fill="#fff" /></svg>
          <input type="range" aria-label="Zoom" min="0" max="200" defaultValue="100" />
          <svg width="8" height="8"><path d="M3 0h2v3h3v2H5v3H3V5H0V3h3z" fill="#fff" /></svg>
          <output>100 %</output>
        </ZoomControl>
      </StatusBar>
    </Window>
  </>
);

export default App;
